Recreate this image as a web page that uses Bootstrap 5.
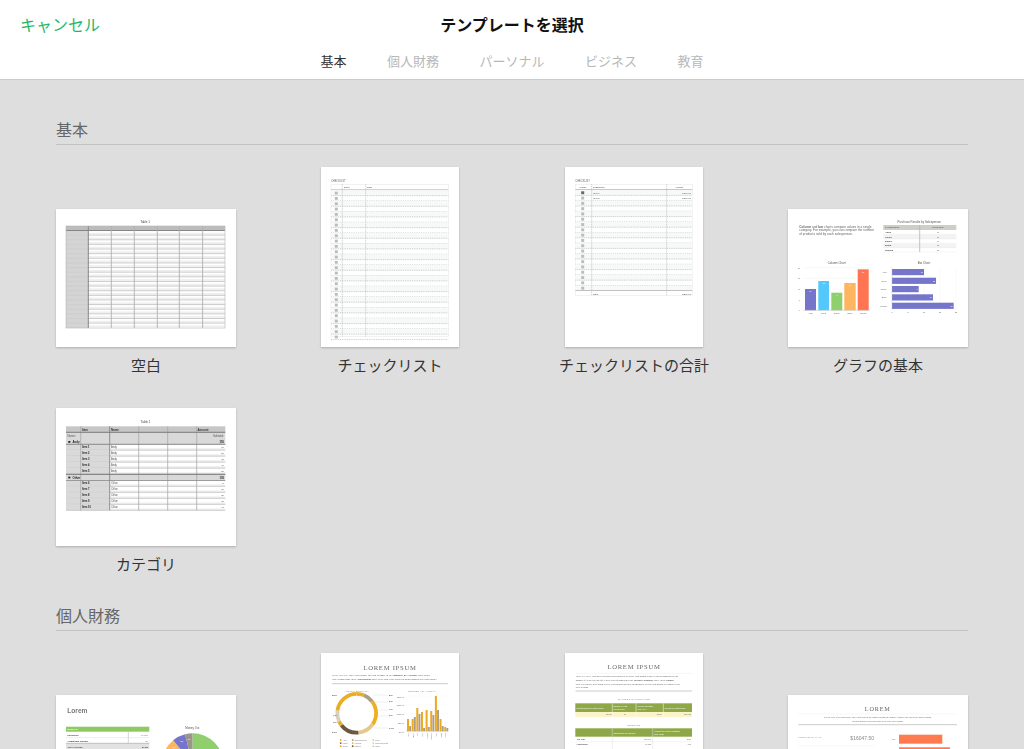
<!DOCTYPE html>
<html lang="ja">
<head>
<meta charset="UTF-8">
<meta name="viewport" content="width=device-width, initial-scale=1.0">
<title>テンプレートを選択</title>
<link href="https://cdn.jsdelivr.net/npm/bootstrap@5.3.3/dist/css/bootstrap.min.css" rel="stylesheet">
<style>
  html, body { height: 100%; }
  body {
    background: #dedede;
    font-family: "Liberation Sans", "Noto Sans CJK JP", sans-serif;
    overflow: hidden;
  }
  .top-bar { height: 80px; border-bottom: 1px solid #cacaca; }
  .top-row { height: 51px; padding-left: 20px; }
  .cancel-link { color: #1fb866; font-size: 16px; text-decoration: none; line-height: 1; }
  .top-title { font-size: 16px; font-weight: 700; color: #111; left: 0; right: 0; pointer-events: none; }
  .tab-row { gap: 40.5px; }
  .tab-link { font-size: 13px; color: #b8b8b8; padding: 0; line-height: 22px; }
  .tab-link:hover { color: #b8b8b8; }
  .tab-link.active { color: #333; }
  .page-body { padding: 39px 56px 0; }
  .section-head {
    font-size: 16px; font-weight: 400; line-height: 24px; color: #666;
    margin: 0 0 22px; padding-bottom: 1px; border-bottom: 1px solid #c2c2c2;
  }
  .thumb-grid {
    display: grid;
    grid-template-columns: repeat(4, 180px);
    column-gap: 64px;
    row-gap: 31px;
    align-items: end;
    margin-bottom: 29px;
  }
  .thumb-cell { display: flex; flex-direction: column; align-items: center; }
  .thumb-page { display: block; background: #fff; box-shadow: 0 1px 2px rgba(0,0,0,.22); }
  .thumb-art { filter: blur(.35px); }
  .thumb-label { font-size: 15px; line-height: 22px; color: #333; margin-top: 8px; white-space: nowrap; }
</style>
</head>
<body>

<header class="top-bar bg-white position-relative">
  <div class="top-row d-flex align-items-center position-relative">
    <a class="cancel-link" href="#">キャンセル</a>
    <div class="top-title position-absolute text-center">テンプレートを選択</div>
  </div>
  <nav class="nav tab-row justify-content-center">
    <a class="nav-link tab-link active" href="#">基本</a>
    <a class="nav-link tab-link" href="#">個人財務</a>
    <a class="nav-link tab-link" href="#">パーソナル</a>
    <a class="nav-link tab-link" href="#">ビジネス</a>
    <a class="nav-link tab-link" href="#">教育</a>
  </nav>
</header>

<main class="page-body">
  <h2 class="section-head">基本</h2>
  <div class="thumb-grid">
    <div class="thumb-cell"><svg class="thumb-page" width="180" height="138" data-thumb="blank"></svg><div class="thumb-label">空白</div></div>
    <div class="thumb-cell"><svg class="thumb-page" width="138" height="180" data-thumb="checklist"></svg><div class="thumb-label">チェックリスト</div></div>
    <div class="thumb-cell"><svg class="thumb-page" width="138" height="180" data-thumb="checktotal"></svg><div class="thumb-label">チェックリストの合計</div></div>
    <div class="thumb-cell"><svg class="thumb-page" width="180" height="138" data-thumb="charts"></svg><div class="thumb-label">グラフの基本</div></div>
    <div class="thumb-cell"><svg class="thumb-page" width="180" height="138" data-thumb="category"></svg><div class="thumb-label">カテゴリ</div></div>
  </div>

  <h2 class="section-head">個人財務</h2>
  <div class="thumb-grid">
    <div class="thumb-cell"><svg class="thumb-page" width="180" height="138" data-thumb="budget"></svg></div>
    <div class="thumb-cell"><svg class="thumb-page" width="138" height="180" data-thumb="summary"></svg></div>
    <div class="thumb-cell"><svg class="thumb-page" width="138" height="180" data-thumb="savings"></svg></div>
    <div class="thumb-cell"><svg class="thumb-page" width="180" height="138" data-thumb="portfolio"></svg></div>
  </div>
</main>

<script src="https://cdn.jsdelivr.net/npm/bootstrap@5.3.3/dist/js/bootstrap.bundle.min.js"></script>
<script>
  // small svg helpers for the template previews
  function rect(x, y, w, h, fill) {
    return `<rect x="${x}" y="${y}" width="${w}" height="${h}" fill="${fill}"/>`;
  }
  function line(x1, y1, x2, y2, stroke, sw, dash) {
    return `<line x1="${x1}" y1="${y1}" x2="${x2}" y2="${y2}" stroke="${stroke}" stroke-width="${sw || .5}"${dash ? ` stroke-dasharray="${dash}"` : ''}/>`;
  }
  function txt(x, y, s, size, fill, anchor, extra) {
    return `<text x="${x}" y="${y}" font-size="${size}" fill="${fill || '#555'}" text-anchor="${anchor || 'start'}" ${extra || ''}>${s}</text>`;
  }
  function polar(cx, cy, r, deg) {
    const a = (deg - 90) * Math.PI / 180;
    return [cx + r * Math.cos(a), cy + r * Math.sin(a)];
  }
  function slice(cx, cy, r, a0, a1, fill) {
    const p = polar(cx, cy, r, a0), q = polar(cx, cy, r, a1);
    return `<path d="M${cx} ${cy}L${p[0]} ${p[1]}A${r} ${r} 0 ${a1 - a0 > 180 ? 1 : 0} 1 ${q[0]} ${q[1]}Z" fill="${fill}"/>`;
  }
  function ring(cx, cy, r, a0, a1, stroke, sw) {
    const p = polar(cx, cy, r, a0), q = polar(cx, cy, r, a1);
    return `<path d="M${p[0]} ${p[1]}A${r} ${r} 0 ${a1 - a0 > 180 ? 1 : 0} 1 ${q[0]} ${q[1]}" fill="none" stroke="${stroke}" stroke-width="${sw}"/>`;
  }
  const SERIF = 'font-family="Liberation Serif, serif"';

  function blankThumb() {
    let s = txt(89, 14, 'Table 1', 3, '#444', 'middle');
    s += rect(10, 17, 159, 102, '#fff');
    s += rect(10, 21.5, 22.3, 97.5, '#d4d4d4');
    for (let i = 0; i < 21; i++) {
      const y = 21.5 + i * 4.63;
      s += rect(32, y + 2.3, 137, 1.6, '#efefef');
      s += line(10, y, 32, y, '#c6c6c6', .5);
      s += line(32, y, 169, y, '#b4b4b4', .7);
    }
    s += rect(10, 17, 159, 4.5, '#bcbcbc');
    s += line(10, 21.5, 169, 21.5, '#858585', 1);
    [55.3, 78.3, 101.3, 123.3, 146.6].forEach(x => { s += line(x, 17, x, 119, '#b0b0b0', .9); });
    s += line(32.3, 17, 32.3, 119, '#858585', 1);
    s += `<rect x="10" y="17" width="159" height="102" fill="none" stroke="#b5b5b5" stroke-width=".6"/>`;
    return s;
  }

  function checklistThumb() {
    let s = txt(10, 15, 'CHECKLIST', 2.6, '#666');
    s += txt(23, 21, 'Done', 2.4, '#444') + txt(46, 21, 'Task', 2.4, '#444');
    s += `<rect x="10" y="17.3" width="117.3" height="152.4" fill="none" stroke="#e6e6e6" stroke-width=".5"/>`;
    s += rect(10, 22, 117.3, 1.3, '#d4d4d4');
    for (let i = 0; i < 28; i++) {
      const y = 23.3 + i * 5.33;
      if (i % 2 === 0) s += rect(10, y, 117.3, 5.33, '#f6f9f8');
      s += line(10, y + 5.33, 127.3, y + 5.33, '#b4b4b4', .7, '1 .8');
      s += rect(13.8, y + 1.4, 3, 2.8, '#bcbcbc');
    }
    s += line(21.3, 17.3, 21.3, 169.7, '#b4b4b4', .7, '1 .8');
    s += line(44.7, 17.3, 44.7, 169.7, '#b4b4b4', .7, '1 .8');
    return s;
  }

  function checktotalThumb() {
    let s = txt(10.3, 15, 'CHECKLIST', 2.6, '#666');
    s += txt(17.7, 21, 'Yes/No', 2.3, '#444', 'middle') + txt(28, 21, 'Description', 2.3, '#444') + txt(114, 21, 'Amount', 2.3, '#444', 'middle');
    s += `<rect x="10.3" y="17.3" width="117" height="111.4" fill="none" stroke="#e6e6e6" stroke-width=".5"/>`;
    s += rect(10.3, 22, 117, 1.1, '#c8c8c8');
    for (let i = 0; i < 19; i++) {
      const y = 23.1 + i * 5.3;
      if (i % 2 === 0) s += rect(10.3, y, 117, 5.3, '#f5f9f7');
      if (i < 18) s += line(10.3, y + 5.3, 127.3, y + 5.3, '#b4b4b4', .7, '1 .8');
      s += rect(16.2, y + 1.2, 3, 2.9, i ? '#bcbcbc' : '#666');
    }
    s += txt(28, 27, 'Item 1', 2.4, '#555') + txt(126, 27, '$100.00', 2.4, '#555', 'end');
    s += txt(28, 32.4, 'Item 2', 2.4, '#555') + txt(126, 32.4, '$200.00', 2.4, '#555', 'end');
    s += rect(10.3, 123, 117, .9, '#bcbcbc');
    s += txt(28, 127.5, 'Total', 2.4, '#444') + txt(126, 127.5, '$300.00', 2.4, '#444', 'end');
    s += line(26.7, 17.3, 26.7, 128.7, '#b4b4b4', .7, '1 .8');
    s += line(101.7, 17.3, 101.7, 128.7, '#b4b4b4', .7, '1 .8');
    return s;
  }

  function chartsThumb() {
    let s = '';
    s += `<text font-size="3.2" fill="#666"><tspan x="11.3" y="18.6"><tspan font-weight="700">Column</tspan> and <tspan font-weight="700">bar</tspan> charts compare values in a single</tspan><tspan x="11.3" y="22.3">category. For example, you can compare the number</tspan><tspan x="11.3" y="26">of products sold by each salesperson.</tspan></text>`;
    s += txt(131.3, 14.3, 'Purchase Results by Salesperson', 2.9, '#555', 'middle');
    s += rect(95.3, 16, 73, 5, '#cfcdc8');
    s += txt(97, 19.4, 'SALESPERSON', 1.9, '#555') + txt(150, 19.4, 'UNITS SOLD', 1.9, '#555', 'middle');
    const names = ['Andy', 'Olivia', 'Daniel', 'Brian', 'Sophia'], units = [10, 15, 14, 15, 21];
    names.forEach((n, i) => {
      const y = 21 + i * 4.4;
      if (i % 2) s += rect(95.3, y, 73, 4.4, '#f3f3f3');
      s += txt(97, y + 3.2, n, 2.4, '#444', 'start', 'font-weight="700"') + txt(150, y + 3.2, units[i], 2.2, '#777', 'middle');
      s += line(95.3, y + 4.4, 168.3, y + 4.4, '#e4e4e4', .4);
    });
    s += line(131.7, 16, 131.7, 43, '#b4b4b4', .8);

    // column chart
    s += txt(48.7, 55.4, 'Column Chart', 2.9, '#555', 'middle');
    [58.7, 69.4, 80, 90.7].forEach(y => { s += line(15.3, y, 82, y, '#eee', .4); });
    ['20', '15', '10', '5', '0'].forEach((t, i) => { s += txt(12, 59.7 + i * 10.65, t, 2.1, '#777', 'end'); });
    const cols = [[17, 11, 80, '#7475cb', '10'], [30.3, 10.7, 72, '#53c9fb', '15'], [43.3, 11, 83.7, '#90cf6d', '9'], [56.3, 11.4, 74, '#fdb560', '14'], [69.7, 11, 60.3, '#ff7553', '21']];
    cols.forEach((c, i) => {
      s += rect(c[0], c[2], c[1], 101.3 - c[2], c[3]);
      s += txt(c[0] + c[1] / 2, c[2] + 3.2, c[4], 2.1, '#fff', 'middle');
      s += txt(c[0] + c[1] / 2, 104.6, names[i], 2.1, '#666', 'middle');
    });
    s += line(15.3, 101.3, 82, 101.3, '#bbb', .5);

    // bar chart
    s += txt(136, 55.4, 'Bar Chart', 2.9, '#555', 'middle');
    [120, 136, 152, 168].forEach(x => { s += line(x, 58.5, x, 101, '#eee', .4); });
    const bars = [[60, 136, '10'], [68.7, 148, '15'], [77, 130.7, '9'], [85.3, 145, '14'], [93.7, 165.7, '21']];
    bars.forEach((b, i) => {
      s += rect(104, b[0], b[1] - 104, 6.2, '#7475cb');
      s += txt(b[1] - 1, b[0] + 3.9, b[2], 2.1, '#fff', 'end');
      s += txt(98.7, b[0] + 3.8, names[i], 2.1, '#666', 'end');
    });
    s += line(104, 58.5, 104, 101, '#bbb', .4);
    ['0', '5', '10', '15', '20'].forEach((t, i) => { s += txt(104 + i * 16, 104.4, t, 2.1, '#666', 'middle'); });
    return s;
  }

  function categoryThumb() {
    const cols = [24.7, 53.7, 82.7, 111.7, 140.7];
    let s = txt(89.7, 15.3, 'Table 1', 3, '#444', 'middle');
    s += rect(10, 18.3, 159.3, 84, '#fff');
    s += rect(10, 18.3, 159.3, 6, '#c6c6c6');
    s += txt(26, 22.6, 'Item', 2.9, '#333', 'start', 'font-weight="700"') + txt(55, 22.6, 'Name', 2.9, '#333', 'start', 'font-weight="700"') + txt(141.5, 22.6, 'Amount', 2.9, '#333', 'start', 'font-weight="700"');
    s += rect(10, 24.3, 159.3, 12, '#d9d9d9');
    s += txt(11.5, 29, 'Name:', 2.8, '#555') + txt(168, 29, 'Subtotal:', 2.8, '#555', 'end');
    s += rect(12.3, 33, 2, 1.8, '#222') + txt(16.5, 35, 'Andy', 2.9, '#222', 'start', 'font-weight="700"') + txt(168, 35, '150', 2.7, '#222', 'end', 'font-weight="700"');
    s += rect(10, 66.3, 159.3, 6.2, '#d9d9d9');
    s += rect(12.3, 68.6, 2, 1.8, '#222') + txt(16.5, 70.7, 'Other', 2.9, '#222', 'start', 'font-weight="700"') + txt(168, 70.7, '105', 2.7, '#222', 'end', 'font-weight="700"');
    const rows = [[36.3, 'Item 1', 'Andy', 10], [42.3, 'Item 2', 'Andy', 20], [48.3, 'Item 3', 'Andy', 30], [54.3, 'Item 4', 'Andy', 40], [60.3, 'Item 5', 'Andy', 50], [72.5, 'Item 6', 'Chloe', 5], [78.5, 'Item 7', 'Chloe', 10], [84.5, 'Item 8', 'Chloe', 20], [90.5, 'Item 9', 'Chloe', 30], [96.5, 'Item 10', 'Chloe', 40]];
    rows.forEach(r => {
      const y = r[0];
      s += rect(10, y, 43.7, 5.8, '#d9d9d9');
      s += rect(53.7, y + 4, 115.6, 1.8, '#ededed');
      s += line(10, y + 5.9, 169.3, y + 5.9, '#b4b4b4', .6);
      s += txt(26, y + 3.9, r[1], 2.6, '#222', 'start', 'font-weight="700"');
      s += txt(55, y + 3.9, r[2], 2.6, '#555');
      s += txt(168, y + 3.9, r[3], 2.5, '#555', 'end');
    });
    cols.forEach((x, i) => { s += line(x, 18.3, x, 102.3, i === 1 ? '#858585' : '#aaa', i === 1 ? .9 : .8); });
    s += line(10, 24.3, 169.3, 24.3, '#777', 1);
    s += line(10, 36.3, 169.3, 36.3, '#888', 1);
    s += line(10, 66.3, 169.3, 66.3, '#777', 1);
    s += line(10, 72.5, 169.3, 72.5, '#888', .8);
    return s;
  }

  function budgetThumb() {
    let s = txt(11.3, 18.3, 'Lorem', 6.6, '#777', 'start', 'font-weight="700"');
    s += rect(10, 31.7, 83.3, 5, '#8fc964') + txt(11.5, 35.2, 'MONEY IN', 2, '#fff', 'start', 'font-weight="700"');
    s += txt(11.5, 41, 'Paycheck', 2.4, '#333', 'start', 'font-weight="700"') + txt(92, 41, '$4,200', 2.2, '#777', 'end');
    s += line(10, 42.7, 93.3, 42.7, '#ddd', .5);
    s += txt(11.5, 46.8, 'Additional income', 2.4, '#333', 'start', 'font-weight="700"') + txt(92, 46.8, '$0', 2.2, '#777', 'end');
    s += line(72.3, 36.7, 72.3, 48.3, '#bbb', .6);
    s += rect(10, 48.3, 83.3, 6, '#e2e2e2') + line(10, 48.3, 93.3, 48.3, '#aaa', .7);
    s += txt(11.5, 52.6, 'TOTAL INCOME', 2, '#444', 'start', 'font-weight="700"') + txt(92, 52.6, '$4,200', 2, '#444', 'end', 'font-weight="700"');
    s += txt(136.3, 34.3, 'Money Out', 2.9, '#555', 'middle');
    const cx = 136.5, cy = 69, r = 30.7;
    s += slice(cx, cy, r, 0, 186, '#90cf6d') + slice(cx, cy, r, 186, 296, '#ff7553') + slice(cx, cy, r, 296, 321, '#fdb560') + slice(cx, cy, r, 321, 346, '#7475cb') + slice(cx, cy, r, 346, 360, '#9b958a');
    s += txt(133, 45, '4%', 2.3, '#fff', 'middle') + txt(126, 47, '8%', 2.3, '#fff', 'middle') + txt(118, 53, '7%', 2.3, '#fff', 'middle');
    return s;
  }

  function serifLines(rows, size, x, anchor) {
    return rows.map(r => txt(x, r[0], r[1], size, '#555', anchor || 'start', SERIF)).join('');
  }

  function summaryThumb() {
    let s = txt(69, 16.5, 'LOREM IPSUM', 6.6, '#666', 'middle', SERIF + ' letter-spacing=".75"');
    s += serifLines([[23, 'HOW TO USE: Enter your budget for each category in the <tspan font-weight="700">Summary By Category</tspan> table below.'], [27.4, 'Enter transactions in the <tspan font-weight="700">Transactions</tspan> sheet to see how your actual spending compares to your budget.']], 2.55, 11);
    s += line(11, 30.7, 127, 30.7, '#c6c6c6', .9);
    s += txt(35.7, 38.6, 'ACTUAL SUMMARY', 2.2, '#777', 'middle', 'letter-spacing=".3"');
    s += txt(101.3, 38.6, 'BUDGET VS. ACTUAL', 2.2, '#777', 'middle', 'letter-spacing=".3"');
    const cx = 35.7, cy = 60.3, r = 19.4, w = 3.8;
    [[0, 22, '#e9ae27'], [22, 52, '#ab9c84'], [52, 125, '#edb022'], [125, 175, '#e5c98c'], [175, 232, '#6a5840'], [232, 246, '#e9ae27'], [246, 278, '#d6d0c2'], [278, 360, '#e9ae27']].forEach(a => { s += ring(cx, cy, r, a[0], a[1], a[2], w); });
    [['8%', 68, 43], ['5%', 68, 49], ['7%', 68, 57], ['3%', 68, 63], ['17%', 68, 76]].forEach(l => { s += txt(l[1], l[2], l[0], 2.5, '#555', 'start', 'font-weight="700"'); });
    [['29%', 11, 43], ['7%', 12, 63], ['3%', 12, 70], ['21%', 11, 80]].forEach(l => { s += txt(l[1], l[2], l[0], 2.5, '#555', 'start', 'font-weight="700"'); });
    [[52, 42], [53, 49], [56, 57], [56, 63], [53, 75]].forEach(p => { s += line(p[0], p[1], 67, p[1], '#c8c8c8', .3); });
    ['$200.00', '$150.00', '$100.00', '$50.00', '$0.00'].forEach((t, i) => { s += txt(83, 44.5 + i * 8.8, t, 2, '#777', 'end'); });
    [43, 51.8, 60.6, 69.4].forEach(y => { s += line(85, y, 127, y, '#f0f0f0', .3); });
    const amber = [66, 66, 55, 59, 57, 58, 43, 66, 74], gray = [73, 64, 61, 75, 74, 62, 57, 73, 75];
    amber.forEach((t, i) => {
      const x = 86 + i * 4.65;
      s += rect(x, t, 2, 78.3 - t, '#eba91f') + rect(x + 2.2, gray[i], 1.9, 78.3 - gray[i], '#ab9c84');
    });
    s += line(85, 78.3, 127, 78.3, '#bbb', .4);
    ['Auto', 'Dining', 'Fun', 'Food', 'Medical', 'Personal', 'Rent', 'Travel', 'Other'].forEach((t, i) => {
      const x = 88 + i * 4.65;
      s += `<text x="${x}" y="80" font-size="1.8" fill="#777" text-anchor="end" transform="rotate(-90 ${x} 80)">${t}</text>`;
    });
    const legend = [['Auto', '#eba91f'], ['Entertainment', '#ab9c84'], ['Food', '#e5c98c'], ['Home', '#6a5840'], ['Medical', '#edb022'], ['Personal Items', '#d6d0c2'], ['Travel', '#eba91f'], ['Utilities', '#6a5840'], ['Other', '#e5c98c']];
    legend.forEach((l, i) => {
      const x = [19.7, 31.7, 52.3][i % 3], y = 87 + Math.floor(i / 3) * 3.1;
      s += `<circle cx="${x}" cy="${y}" r=".9" fill="${l[1]}"/>` + txt(x + 2, y + .7, l[0], 1.9, '#777');
    });
    return s;
  }

  function savingsThumb() {
    let s = txt(69, 16, 'LOREM IPSUM', 6.6, '#666', 'middle', SERIF + ' letter-spacing=".75"');
    s += line(10.5, 20.3, 127, 20.3, '#e4e4e4', .4);
    s += serifLines([[24.4, 'HOW TO USE: This sheet calculates how much to set aside each month to meet your savings goal by the'], [28, 'number of years you specify. Enter your information in the <tspan font-weight="700">Savings Calculator</tspan> table. In the <tspan font-weight="700">Results</tspan>'], [31.6, 'table you can see how much to save each month and how saving more or less each month will impact your'], [35.2, 'total savings.']], 2.45, 10.7);
    s += line(10.5, 38, 127, 38, '#c6c6c6', .9);
    s += txt(69, 47.2, 'SAVINGS CALCULATOR', 2.3, '#777', 'middle', 'letter-spacing=".35"');
    s += rect(10.3, 50.3, 116.7, 8.7, '#8ea848') + rect(10.3, 59, 116.7, 5, '#fdf3c9');
    s += txt(11.5, 55.5, 'Current amount you have saved', 1.9, '#fff') + txt(48.3, 53.7, 'Number of years', 1.9, '#fff') + txt(48.3, 56.9, 'you can save', 1.9, '#fff') + txt(72, 53.7, 'Annual Percentage', 1.9, '#fff') + txt(72, 56.9, 'Yield (APY)', 1.9, '#fff') + txt(99.3, 55.5, 'Amount you want to save', 1.9, '#fff');
    s += txt(47, 62.2, '$5,000', 1.9, '#666', 'end') + txt(60, 62.2, '10', 1.9, '#666', 'middle') + txt(97, 62.2, '3.00%', 1.9, '#666', 'end') + txt(126, 62.2, '$10,000', 1.9, '#666', 'end');
    [47.3, 71, 98.3].forEach(x => { s += line(x, 50.3, x, 64, '#fff', .5); });
    s += txt(69, 73, 'RESULTS', 2.3, '#777', 'middle', 'letter-spacing=".35"');
    s += rect(10.3, 75.3, 116.7, 8.4, '#8ea848');
    s += txt(48.5, 80.5, 'Total amount you will save', 1.9, '#fff') + txt(89, 78.6, 'Amount you need to contribute', 1.9, '#fff') + txt(89, 81.8, 'each month', 1.9, '#fff');
    [47.3, 87.7].forEach(x => { s += line(x, 75.3, x, 115, '#ddd', .5); });
    s += txt(11.5, 87, 'Year after', 2, '#444', 'start', SERIF + ' font-weight="700"') + txt(86, 87, '$10,000', 1.9, '#777', 'end') + txt(126, 87, '$110', 1.9, '#777', 'end');
    s += line(10.3, 88.7, 127, 88.7, '#e2e2e2', .4);
    s += txt(11.5, 92, 'Contribution', 2, '#444', 'start', SERIF + ' font-weight="700"') + txt(86, 92, '$9,252', 1.9, '#777', 'end') + txt(126, 92, '$95', 1.9, '#777', 'end');
    return s;
  }

  function portfolioThumb() {
    let s = txt(89.7, 15.5, 'LOREM', 6.2, '#666', 'middle', SERIF + ' letter-spacing=".8"');
    s += line(10.3, 19, 169, 19, '#e8e8e8', .4);
    s += serifLines([[23, 'See the value of all your stocks. Enter each stock in the Symbol column, the number of shares you own in the Shares column,'], [26.6, 'and how much you paid per share in the Price Paid column.']], 2.15, 89.7, 'middle');
    s += line(10.3, 29.7, 169, 29.7, '#c6c6c6', .9);
    s += txt(10.3, 43.4, 'PORTFOLIO GAIN', 2.2, '#888', 'start', 'letter-spacing=".35"');
    s += txt(86, 44.6, '$16047.50', 5, '#888', 'end');
    s += line(10.3, 51, 86, 51, '#e8e8e8', .4);
    s += txt(107.5, 44.5, 'gain', 1.9, '#888', 'end');
    s += rect(111, 39.7, 43.3, 9, '#ff7a4e') + rect(111, 52.3, 51, 9, '#ff7a4e') + rect(111, 65, 36, 9, '#ff7a4e');
    return s;
  }

  const thumbs = {
    blank: blankThumb, checklist: checklistThumb, checktotal: checktotalThumb, charts: chartsThumb,
    category: categoryThumb, budget: budgetThumb, summary: summaryThumb, savings: savingsThumb, portfolio: portfolioThumb
  };

  document.querySelectorAll('[data-thumb]').forEach(el => {
    el.setAttribute('font-family', 'Liberation Sans, sans-serif');
    el.innerHTML = `<g class="thumb-art">${thumbs[el.dataset.thumb]()}</g>`;
  });
</script>
</body>
</html>
